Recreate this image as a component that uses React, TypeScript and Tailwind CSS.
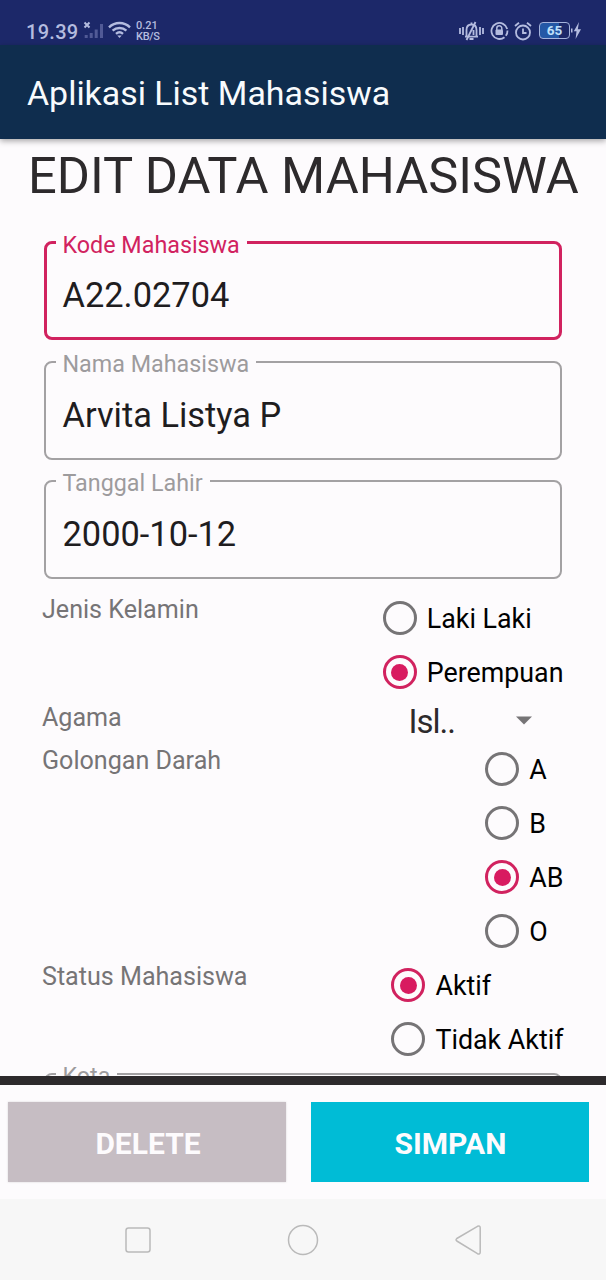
import type { ReactNode } from "react";

type FieldProps = { label: string; value: string; active?: boolean };

function OutlinedField({ label, value, active = false }: FieldProps) {
  return (
    <fieldset
      className={
        active
          ? "mx-[44px] h-[112px] rounded-[8px] border-[3px] border-[#d1225f] pl-[8.5px]"
          : "mx-[44px] h-[112px] rounded-[8px] border-[2px] border-[#a3a1a3] pl-[9.5px]"
      }
    >
      <legend
        className={
          active
            ? "h-[28px] px-[7px] text-[23.3px] leading-[34px] text-[#d1225f]"
            : "h-[28px] px-[7px] text-[23.3px] leading-[33px] text-[#9d9b9d]"
        }
      >
        {label}
      </legend>
      <div className="pl-[7px] pt-[19px] text-[34.4px] leading-[40px] text-[#1f1d1f]">{value}</div>
    </fieldset>
  );
}

function Radio({ label, checked = false }: { label: string; checked?: boolean }) {
  return (
    <label className="flex h-[54px] items-center">
      <span
        className={
          checked
            ? "flex size-[34px] items-center justify-center rounded-full border-[3px] border-[#d1225f]"
            : "flex size-[34px] items-center justify-center rounded-full border-[3px] border-[#767476]"
        }
      >
        {checked && <span className="size-[17px] rounded-full bg-[#d81b60]" />}
      </span>
      <span className="ml-[10px] pt-[1px] text-[26.8px] leading-[32px] text-black">{label}</span>
    </label>
  );
}

function Row({ label, children }: { label: string; children: ReactNode }) {
  return (
    <div className="flex items-start justify-between pl-[42px] pr-[42.5px]">
      <span className="pt-[4px] text-[25.1px] leading-[30px] text-[#767476]">{label}</span>
      {children}
    </div>
  );
}

function StatusBar() {
  return (
    <div className="flex h-[45px] shrink-0 items-end justify-between bg-[#1c2869] pl-[26px] pr-[25px] text-[#b4bcdf]">
      <div className="flex h-[30px] items-center">
        <span className="w-[52px] pt-[3px] text-[20px] font-medium leading-[30px] tracking-[0.3px]">19.39</span>
        <svg className="ml-[5px] h-[20px] w-[22px]" viewBox="0 0 22 20" fill="none">
          <path d="M1.5 2.5l5 5M6.5 2.5l-5 5" stroke="#b4bcdf" strokeWidth="2" />
          <path d="M3.2 15v3M8.2 13v5M13.2 9.500v8.500M18.500 4v14" stroke="#515a96" strokeWidth="3" />
        </svg>
        <svg className="ml-[3px] h-[18px] w-[23px]" viewBox="0 0 23 18" fill="none" stroke="#b4bcdf" strokeWidth="2.4">
          <path d="M1 6.300C7 .600 16 .600 22 6.300" />
          <path d="M4.600 9.700c4-3.700 9.800-3.700 13.800 0" />
          <path d="M8 12.800c2.200-1.900 4.800-1.900 7 0" />
          <path d="M9.300 14.400h4.400L11.500 17z" fill="#b4bcdf" stroke="none" />
        </svg>
        <div className="ml-[5px] flex flex-col pt-[3px] text-[11px] font-medium leading-[10.5px]">
          <span>0.21</span>
          <span className="tracking-[-0.3px]">KB/S</span>
        </div>
      </div>
      <div className="flex h-[30px] items-center pt-[1px]">
        <svg className="h-[20px] w-[25px]" viewBox="0 0 25 20" fill="none" stroke="#b4bcdf" strokeWidth="1.800">
          <path d="M1 7v6M4 6v8M21 6v8M24 7v6" />
          <path d="M7.500 15.500V9c0-3.500 1.500-5.500 5-5.500S17.500 5.500 17.500 9v6.500M6 15.700h13M10.500 18h4M12.500 1.500v2" />
          <path d="M16.500 1L7.500 19M14.500 9v5" />
        </svg>
        <svg className="ml-[6px] h-[18px] w-[19px]" viewBox="0 0 19 18" fill="none" stroke="#b4bcdf" strokeWidth="1.800">
          <path d="M14.500 15.200A8 8 0 1 1 17.200 7" />
          <path d="M17.500 8.500c.1 2-.5 3.700-1.700 5.200" />
          <path d="M6.800 8V6.300a2.500 2.500 0 0 1 5 0V8" strokeWidth="1.500" />
          <rect x="5.500" y="7.500" width="7.500" height="5.500" rx="1" fill="#b4bcdf" stroke="none" />
        </svg>
        <svg className="ml-[5px] h-[20px] w-[18px]" viewBox="0 0 18 20" fill="none" stroke="#b4bcdf" strokeWidth="1.800">
          <circle cx="9" cy="11.500" r="7" />
          <path d="M9 7.500V12h3.500M1 5l4-3.300M17 5l-4-3.300" />
        </svg>
        <span className="ml-[7px] flex h-[17px] w-[31px] items-center justify-center rounded-[4px] border border-[#a4b3dc] bg-[linear-gradient(90deg,#2458a6_65%,#1c2869_65%)] pt-[1px] text-[13.5px] font-bold leading-none text-[#bfe0fa]">
          65
        </span>
        <svg className="ml-[1px] h-[17px] w-[10px]" viewBox="0 0 10 17" fill="#b4bcdf">
          <path d="M0 6.500h1.500v4H0zM8 0L2.800 9.200h2.700L4.600 17 10 7.200H6.800z" />
        </svg>
      </div>
    </div>
  );
}

export default function App() {
  return (
    <div className="flex h-[1280px] w-[606px] flex-col overflow-hidden bg-[#fdfbfd] font-[Roboto,sans-serif]">
      <StatusBar />
      <header className="z-10 flex h-[94px] shrink-0 items-center bg-[#0f2d4e] pl-[27px] pt-[3px] shadow-[0_2px_6px_rgba(0,0,0,0.35)]">
        <h1 className="whitespace-nowrap text-[33.9px] leading-[40px] text-[#f8fbfd]">Aplikasi List Mahasiswa</h1>
      </header>
      <main className="flex h-[937px] shrink-0 flex-col overflow-hidden">
        <h2 className="h-[89px] shrink-0 whitespace-nowrap pl-[28px] pt-[7px] text-[50.6px] leading-[60px] text-[#2d2a2c]">
          EDIT DATA MAHASISWA
        </h2>
        <div className="flex flex-col gap-[7.700px]">
          <OutlinedField label="Kode Mahasiswa" value="A22.02704" active />
          <OutlinedField label="Nama Mahasiswa" value="Arvita Listya P" />
          <OutlinedField label="Tanggal Lahir" value="2000-10-12" />
        </div>
        <div className="mt-[12px] flex flex-col">
          <Row label="Jenis Kelamin">
            <div className="flex flex-col">
              <Radio label="Laki Laki" />
              <Radio label="Perempuan" checked />
            </div>
          </Row>
          <Row label="Agama">
            <div className="flex h-[43px] w-[155px] items-center justify-between pr-[32px]">
              <span className="pt-[3px] text-[33px] leading-[40px] tracking-[-1px] text-[#2d2a2c]">Isl..</span>
              <svg className="h-[9px] w-[16px]" viewBox="0 0 16 9" fill="#767476">
                <path d="M0 .5h16L8 8.500z" />
              </svg>
            </div>
          </Row>
          <Row label="Golongan Darah">
            <div className="flex flex-col">
              <Radio label="A" />
              <Radio label="B" />
              <Radio label="AB" checked />
              <Radio label="O" />
            </div>
          </Row>
          <Row label="Status Mahasiswa">
            <div className="flex flex-col">
              <Radio label="Aktif" checked />
              <Radio label="Tidak Aktif" />
            </div>
          </Row>
        </div>
        <div className="-mt-[6px] shrink-0">
          <OutlinedField label="Kota" value="" />
        </div>
      </main>
      <div className="h-[8.500px] shrink-0 bg-[#2d2a2c]" />
      <div className="flex h-[114.500px] shrink-0 items-start gap-[25px] px-[8px] pt-[17.500px]">
        <button className="h-[80px] w-[278px] bg-[#c6bdc3] pl-[2px] pt-[2px] text-[30px] font-bold text-[#fdfbfd] shadow-[0_0_2px_rgba(0,0,0,0.15)]">
          DELETE
        </button>
        <button className="h-[80px] w-[278px] bg-[#00bcd6] pl-[1px] pt-[2px] text-[30px] font-bold text-[#fdfbfd]">SIMPAN</button>
      </div>
      <nav className="flex h-[82px] shrink-0 items-center justify-between bg-[#f7f7f7] pl-[125px] pr-[124px]">
        <svg className="size-[26px]" viewBox="0 0 26 26" fill="none" stroke="#bababa" strokeWidth="1.500">
          <rect x="1" y="1" width="24" height="24" rx="2.500" />
        </svg>
        <svg className="size-[32px]" viewBox="0 0 32 32" fill="none" stroke="#bababa" strokeWidth="1.500">
          <circle cx="16" cy="16" r="14.500" />
        </svg>
        <svg className="h-[30px] w-[27px]" viewBox="0 0 27 30" fill="none" stroke="#bababa" strokeWidth="1.500" strokeLinejoin="round">
          <path d="M1.800 13.500L22.500 1.300q2.500-1 2.700 1.500v24.400q-.2 2.500-2.700 1.500L1.800 16q-1.500-1.200 0-2.500z" />
        </svg>
      </nav>
    </div>
  );
}
